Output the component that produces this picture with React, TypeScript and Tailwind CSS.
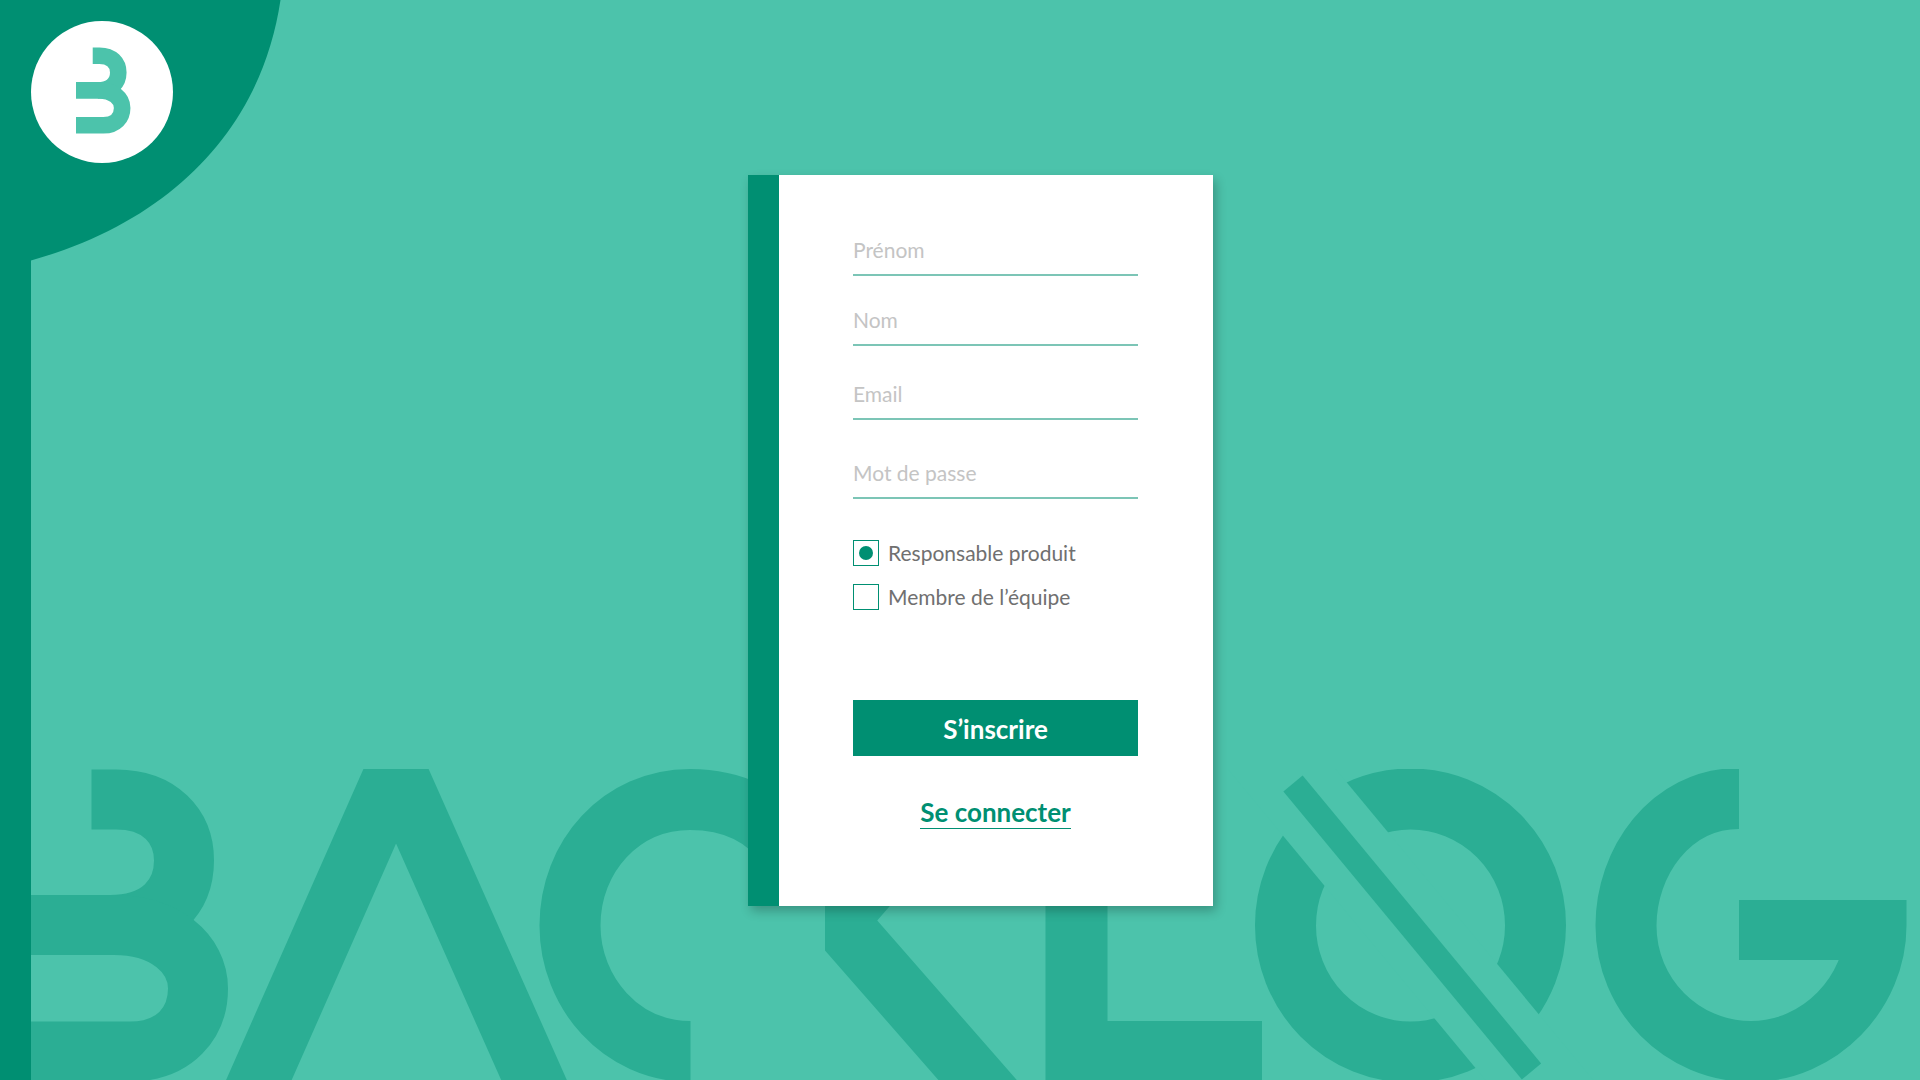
import { useState } from 'react';

const fields = [
  { id: 'prenom', label: 'Prénom', type: 'text', gap: '' },
  { id: 'nom', label: 'Nom', type: 'text', gap: 'mt-[22px]' },
  { id: 'email', label: 'Email', type: 'email', gap: 'mt-[26px]' },
  { id: 'motdepasse', label: 'Mot de passe', type: 'password', gap: 'mt-[31px]' },
];

const roles = [
  { id: 'responsable', label: 'Responsable produit' },
  { id: 'membre', label: 'Membre de l’équipe' },
];

/* Brand mark: two stacked bowls sharing a middle bar. */
function BrandShape() {
  return (
    <g fill="none" stroke="currentColor">
      <path d="M91.500 799H116C160 799 184 826 184 860C184 895 160 924.500 110 924.500" strokeWidth={60} />
      <path d="M31 924.500H114C165 924.500 198 953 198 988C198 1022 175 1051 130 1051H31" strokeWidth={60} />
    </g>
  );
}

function Logo() {
  return (
    <svg viewBox="31 769 199 312" className="h-[87px] w-[55px]" role="img" aria-label="Backlog">
      <BrandShape />
    </svg>
  );
}

function CornerShape() {
  return (
    <svg viewBox="0 0 281 261" className="absolute left-0 top-0 w-[281px] text-[#008f72]" aria-hidden="true">
      <path d="M0 0H280.500C262 125 175 220 31 260.500V261H0Z" fill="currentColor" />
    </svg>
  );
}

function Watermark() {
  return (
    <svg
      viewBox="31 768.500 1889 311.500"
      className="pointer-events-none absolute bottom-0 right-0 w-[calc(100%-31px)] text-[#2bae94]"
      aria-hidden="true"
    >
      <defs>
        <clipPath id="stem">
          <rect x="825" y="760" width="240" height="330" />
        </clipPath>
      </defs>
      <BrandShape />
      <g fill="none" stroke="currentColor">
        <path d="M241 1120L396 769L552 1120" strokeWidth={60} />
        <path d="M690.500 1051C621 1051 570 992 570 925C570 856 621 799 690 799C732 799 768 815 790 850" strokeWidth={61} />
        <path d="M960 780L838 920L1013 1120" strokeWidth={59} clipPath="url(#stem)" />
        <path d="M1076.500 860V1090" strokeWidth={62} />
        <path d="M1060 1051H1262" strokeWidth={61} />
        <ellipse cx="1410.500" cy="925" rx="125" ry="126.500" strokeWidth={61} />
        <path d="M1244 723L1582 1131" stroke="#4cc3ab" strokeWidth={83} />
        <path d="M1293 783L1531.500 1071" strokeWidth={25} />
        <path
          d="M1739 798C1670 798 1626 862 1626 925C1626 995 1682 1051 1751 1051C1820 1051 1876 992 1876 925V899.500"
          strokeWidth={61}
        />
        <path d="M1739 929.500H1870" strokeWidth={60} />
      </g>
    </svg>
  );
}

export default function App() {
  const [role, setRole] = useState('responsable');

  return (
    <div className="relative flex min-h-screen overflow-hidden bg-[#4cc3ab] font-['Lato',sans-serif]">
      <Watermark />
      <div className="w-[31px] shrink-0 bg-[#008f72]" />
      <CornerShape />
      <header className="absolute left-[31px] top-[21px] flex size-[142px] items-center justify-center rounded-full bg-white pb-1 pl-[2px] text-[#4cc3ab]">
        <Logo />
      </header>

      <main className="relative flex flex-1 items-center justify-center py-10 pl-[10px]">
        <form
          onSubmit={(e) => e.preventDefault()}
          className="flex w-[465px] flex-col border-l-[31px] border-[#008f72] bg-white pb-[77px] pl-[74px] pr-[75px] pt-[53px] shadow-[3px_5px_10px_rgba(0,0,0,0.24)]"
        >
          {fields.map((f) => (
            <div key={f.id} className={f.gap}>
              <input
                id={f.id}
                type={f.type}
                aria-label={f.label}
                placeholder={f.label}
                className="block h-12 w-full border-b-2 border-[#7cc5b6] bg-transparent pb-[3px] text-[21px] text-[#707070] outline-none placeholder:text-[#c4c4c4]"
              />
            </div>
          ))}

          <fieldset aria-label="Rôle" className="mt-[41px] flex flex-col gap-[18px]">
            {roles.map((r) => (
              <div key={r.id} className="flex h-[26px] items-center gap-[9px]">
                <span className="grid size-[26px] place-items-center">
                  <input
                    id={r.id}
                    type="radio"
                    name="role"
                    checked={role === r.id}
                    onChange={() => setRole(r.id)}
                    className="peer col-start-1 row-start-1 size-[26px] appearance-none border border-[#008f72]"
                  />
                  <span className="pointer-events-none col-start-1 row-start-1 hidden size-[14px] rounded-full bg-[#008f72] peer-checked:block" />
                </span>
                <label htmlFor={r.id} className="text-[21px] text-[#707070]">
                  {r.label}
                </label>
              </div>
            ))}
          </fieldset>

          <button type="submit" className="mt-[90px] h-14 bg-[#008f72] pt-[3px] text-[26px] font-bold text-white">
            S’inscrire
          </button>
          <a
            href="#connexion"
            className="mt-[40px] self-center border-b border-[#008f72] text-[26px] font-bold leading-8 text-[#008f72]"
          >
            Se connecter
          </a>
        </form>
      </main>
    </div>
  );
}
